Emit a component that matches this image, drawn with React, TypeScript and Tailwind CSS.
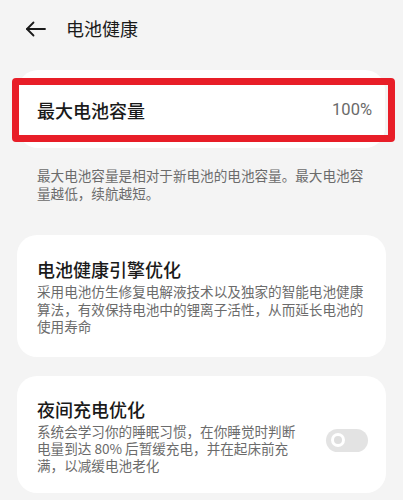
import React from 'react';

const font = { fontFamily: '"Noto Sans CJK SC", "Noto Sans", sans-serif' };

const App: React.FC = () => {
  return (
    <div className="min-h-[500px] w-[403px] bg-[#f4f4f4] overflow-hidden" style={font}>
      {/* Header */}
      <div className="flex items-center h-[58px] pl-[25px]">
        <svg width="21" height="16" viewBox="0 0 21 16" fill="none" stroke="#1a1a1a" strokeWidth="1.8" strokeLinecap="round" strokeLinejoin="round">
          <path d="M20 8H2" />
          <path d="M8.5 1.5L2 8l6.5 6.5" />
        </svg>
        <span className="ml-[20px] text-[18px] leading-[24px] text-[#1a1a1a] mt-[-2px]">电池健康</span>
      </div>

      {/* Max capacity card */}
      <div className="mx-[18px] mt-[12px] bg-white rounded-[20px] pt-[8px] pb-[6px]">
        <div className="ml-[-6px] mr-[-10px] h-[64px] border-[7px] border-[#e81e28] rounded-[4px] flex items-center justify-between pl-[18px] pr-[16px]">
          <span className="text-[18px] leading-[24px] text-[#1a1a1a] font-medium">最大电池容量</span>
          <span className="text-[16.5px] text-[#6a6a6a]" style={{ fontFamily: 'Roboto, "Noto Sans", sans-serif' }}>100%</span>
        </div>
      </div>
      <p className="mx-[37px] mt-[18px] text-[13.6px] leading-[18px] text-[#6b6b6b]">
        最大电池容量是相对于新电池的电池容量。最大电池容量越低，续航越短。
      </p>

      {/* Engine optimization */}
      <div className="mx-[17px] w-[369px] mt-[33px] bg-white rounded-[20px] pl-[20px] pr-[18px] pt-[22px] pb-[21px]">
        <div className="text-[18px] leading-[24px] text-[#1a1a1a] font-medium">电池健康引擎优化</div>
        <p className="mt-[2px] text-[13.6px] leading-[17.5px] text-[#6b6b6b]">
          采用电池仿生修复电解液技术以及独家的智能电池健康算法，有效保持电池中的锂离子活性，从而延长电池的使用寿命
        </p>
      </div>

      {/* Night charging */}
      <div className="mx-[17px] w-[369px] mt-[19px] bg-white rounded-[20px] pl-[20px] pr-[18px] pt-[21px] pb-[19px] flex items-center">
        <div className="w-[262px]">
          <div className="text-[18px] leading-[24px] text-[#1a1a1a] font-medium">夜间充电优化</div>
          <p className="mt-[2px] text-[13.6px] leading-[17px] text-[#6b6b6b]">
            系统会学习你的睡眠习惯，在你睡觉时判断电量到达 80% 后暂缓充电，并在起床前充满，以减缓电池老化
          </p>
        </div>
        <div className="ml-auto mt-[10px] w-[42px] h-[23px] rounded-full bg-[#e3e3e3] flex items-center pl-[5px]">
          <div className="w-[14px] h-[14px] rounded-full bg-white flex items-center justify-center">
            <div className="w-[8px] h-[8px] rounded-full bg-[#dedede]" />
          </div>
        </div>
      </div>
    </div>
  );
};

export default App;
